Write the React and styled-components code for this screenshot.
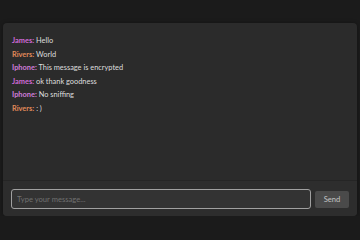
import React from "react";
import styled, { createGlobalStyle } from "styled-components";

const GlobalStyle = createGlobalStyle`
  html, body {
    margin: 0;
    padding: 0;
    background: #1b1b1b;
    font-family: Lato, "Noto Sans", sans-serif;
  }
`;

const nameColors = {
  James: "#cf6ad8",
  Rivers: "#e08a5a",
  Iphone: "#d07ddc",
};

const messages = [
  { from: "James", text: "Hello" },
  { from: "Rivers", text: "World" },
  { from: "Iphone", text: "This message is encrypted" },
  { from: "James", text: "ok thank goodness" },
  { from: "Iphone", text: "No sniffing" },
  { from: "Rivers", text: ": )" },
];

const Page = styled.div`
  padding: 23px 3px 0;
`;

const ChatBox = styled.div`
  display: flex;
  flex-direction: column;
  height: 193px;
  background: #2b2b2b;
  border-radius: 4px;
  box-shadow: 0 0 4px rgba(0, 0, 0, 0.3);
  overflow: hidden;
`;

const MessageList = styled.ul`
  flex: 1;
  list-style: none;
  margin: 0;
  padding: 11px 9px 0;
`;

const Message = styled.li`
  font-size: 7.4px;
  line-height: 13.5px;
  height: 13.5px;
  color: #dedede;
`;

const Name = styled.span`
  font-weight: 700;
  color: ${({ $color }) => $color};
`;

const Footer = styled.form`
  display: flex;
  gap: 4px;
  align-items: center;
  padding: 8px 8px 7px;
  border-top: 1px solid #252525;
  background: #2d2d2d;
`;

const Input = styled.input`
  flex: 1;
  height: 20px;
  box-sizing: border-box;
  background: #333;
  border: 1px solid #a0a0a0;
  border-radius: 3px;
  color: #ddd;
  font-family: inherit;
  font-size: 7.6px;
  padding: 0 5px;
  outline: none;
  &::placeholder {
    color: #707070;
  }
`;

const SendButton = styled.button`
  width: 34px;
  height: 17px;
  background: #4a4a4a;
  border: none;
  border-radius: 2px;
  color: #c4c4c4;
  font-family: inherit;
  font-size: 7.6px;
  padding: 0;
`;

export default function App() {
  return (
    <>
      <GlobalStyle />
      <Page>
        <ChatBox>
          <MessageList>
            {messages.map((m, i) => (
              <Message key={i}>
                <Name $color={nameColors[m.from]}>{m.from}:</Name> {m.text}
              </Message>
            ))}
          </MessageList>
          <Footer onSubmit={(e) => e.preventDefault()}>
            <Input placeholder="Type your message..." />
            <SendButton type="submit">Send</SendButton>
          </Footer>
        </ChatBox>
      </Page>
    </>
  );
}
